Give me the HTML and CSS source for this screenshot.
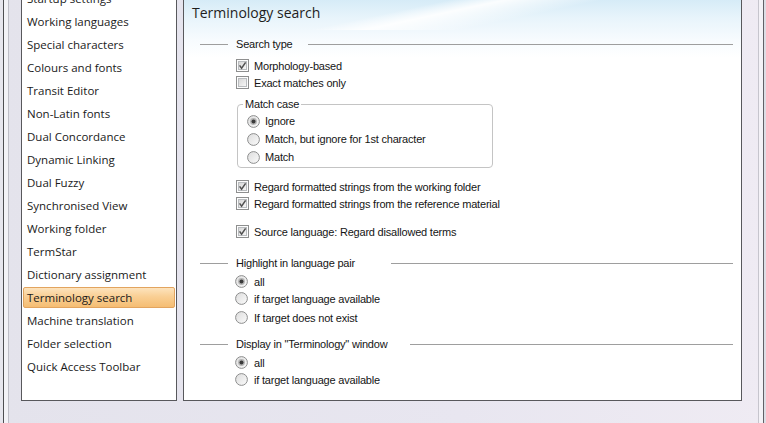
FILE: index.html
```html
<!DOCTYPE html>
<html>
<head>
<meta charset="utf-8">
<title>Terminology search</title>
<link rel="stylesheet" href="styles.css">
</head>
<body>
<svg class="defs" width="0" height="0" aria-hidden="true">
  <defs>
    <linearGradient id="boxg" x1="0" y1="0" x2="1" y2="1">
      <stop offset="0" stop-color="#d6d6d6"/>
      <stop offset="1" stop-color="#f8f8f8"/>
    </linearGradient>
    <linearGradient id="radg" x1="0" y1="0" x2="1" y2="1">
      <stop offset="0" stop-color="#dcdcdc"/>
      <stop offset="1" stop-color="#fbfbfb"/>
    </linearGradient>
    <symbol id="cb" viewBox="0 0 13 13">
      <rect x="0.5" y="0.5" width="12" height="12" fill="#fdfdfd" stroke="#8e8f8f"/>
      <rect x="2.5" y="2.5" width="8" height="8" fill="url(#boxg)" stroke="#b9bcbf"/>
    </symbol>
    <symbol id="cbc" viewBox="0 0 13 13">
      <rect x="0.5" y="0.5" width="12" height="12" fill="#fdfdfd" stroke="#8e8f8f"/>
      <rect x="2.5" y="2.5" width="8" height="8" fill="url(#boxg)" stroke="#b9bcbf"/>
      <path d="M3.6 6.4 L5.6 9.2 L9.6 3.4" fill="none" stroke="#505050" stroke-width="1.5"/>
    </symbol>
    <symbol id="rb" viewBox="0 0 13 13">
      <circle cx="6.5" cy="6.5" r="5.9" fill="url(#radg)" stroke="#8e8f8f"/>
    </symbol>
    <symbol id="rbc" viewBox="0 0 13 13">
      <circle cx="6.5" cy="6.5" r="5.9" fill="url(#radg)" stroke="#8e8f8f"/>
      <circle cx="6.5" cy="6.5" r="3.4" fill="#b4b4b4"/>
      <circle cx="6.5" cy="6.5" r="2" fill="#3a3a3a"/>
    </symbol>
  </defs>
</svg>

<div class="screen">
  <div class="edge-left"></div>

  <div class="nav">
    <ul class="nav-list">
      <li><span class="item">Startup settings</span></li>
      <li><span class="item">Working languages</span></li>
      <li><span class="item">Special characters</span></li>
      <li><span class="item">Colours and fonts</span></li>
      <li><span class="item">Transit Editor</span></li>
      <li><span class="item">Non-Latin fonts</span></li>
      <li><span class="item">Dual Concordance</span></li>
      <li><span class="item">Dynamic Linking</span></li>
      <li><span class="item">Dual Fuzzy</span></li>
      <li><span class="item">Synchronised View</span></li>
      <li><span class="item">Working folder</span></li>
      <li><span class="item">TermStar</span></li>
      <li><span class="item">Dictionary assignment</span></li>
      <li><span class="item selected">Terminology search</span></li>
      <li><span class="item">Machine translation</span></li>
      <li><span class="item">Folder selection</span></li>
      <li><span class="item">Quick Access Toolbar</span></li>
    </ul>
  </div>

  <div class="panel">
    <div class="panel-head">Terminology search</div>
    <div class="panel-body">
      <div class="sep sep-1"><span class="sep-label w-search">Search type</span></div>
      <div class="opt gap-4"><svg class="ic"><use href="#cbc"/></svg><span>Morphology-based</span></div>
      <div class="opt"><svg class="ic"><use href="#cb"/></svg><span>Exact matches only</span></div>

      <fieldset class="group">
        <legend>Match case</legend>
        <div class="gopt"><svg class="ic"><use href="#rbc"/></svg><span>Ignore</span></div>
        <div class="gopt"><svg class="ic"><use href="#rb"/></svg><span>Match, but ignore for 1st character</span></div>
        <div class="gopt"><svg class="ic"><use href="#rb"/></svg><span>Match</span></div>
      </fieldset>

      <div class="opt gap-10"><svg class="ic"><use href="#cbc"/></svg><span>Regard formatted strings from the working folder</span></div>
      <div class="opt"><svg class="ic"><use href="#cbc"/></svg><span>Regard formatted strings from the reference material</span></div>
      <div class="opt gap-11"><svg class="ic"><use href="#cbc"/></svg><span>Source language: Regard disallowed terms</span></div>

      <div class="sep sep-2"><span class="sep-label w-highlight">Highlight in language pair</span></div>
      <div class="opt radio gap-1"><svg class="ic"><use href="#rbc"/></svg><span>all</span></div>
      <div class="opt radio"><svg class="ic"><use href="#rb"/></svg><span>if target language available</span></div>
      <div class="opt radio gap-2"><svg class="ic"><use href="#rb"/></svg><span>If target does not exist</span></div>

      <div class="sep sep-3"><span class="sep-label w-display">Display in "Terminology" window</span></div>
      <div class="opt radio gap-1"><svg class="ic"><use href="#rbc"/></svg><span>all</span></div>
      <div class="opt radio"><svg class="ic"><use href="#rb"/></svg><span>if target language available</span></div>
    </div>
  </div>

  <div class="edge-right"></div>
</div>
</body>
</html>
```
FILE: styles.css
```css
html, body {
  margin: 0;
  padding: 0;
  width: 766px;
  height: 423px;
  overflow: hidden;
}

body {
  background: linear-gradient(to right, #e4e3ec 0%, #e8e6f0 60%, #efebf3 100%);
  font-family: "Liberation Sans", Arial, sans-serif;
  color: #111;
}

.defs {
  display: block;
  width: 0;
  height: 0;
  overflow: hidden;
}

.screen {
  display: flex;
  align-items: flex-start;
  height: 423px;
}

.edge-left {
  width: 21px;
  height: 423px;
  flex: none;
  background: linear-gradient(to right,
    #e7e6ee 0, #e7e6ee 3px,
    #4e4e52 3px, #4e4e52 4px,
    #f3f2f7 4px, #f3f2f7 8px,
    #bebdc7 8px, #bebdc7 9px,
    transparent 9px);
}

/* ---------- navigation list ---------- */
.nav {
  width: 156px;
  height: 401px;
  flex: none;
  box-sizing: border-box;
  background: #fff;
  border: 1px solid #58585c;
  border-top: none;
  overflow: hidden;
}

.nav-list {
  list-style: none;
  margin: -13px 0 0 0;
  padding: 0 1px;
  font-family: "Open Sans", "Liberation Sans", sans-serif;
  font-size: 11.5px;
  color: #1a1a1a;
}

.nav-list li {
  height: 23px;
  padding: 1px 0;
  box-sizing: border-box;
}

.item {
  display: block;
  height: 21px;
  line-height: 21px;
  padding-left: 4px;
  white-space: nowrap;
}

.item.selected {
  box-sizing: border-box;
  line-height: 19px;
  padding-left: 3px;
  border: 1px solid #e2a45f;
  border-radius: 2px;
  background: linear-gradient(to bottom, #fde3bd 0%, #f9cf94 45%, #f5bd73 100%);
}

/* ---------- main panel ---------- */
.panel {
  width: 559px;
  height: 401px;
  flex: none;
  margin-left: 6px;
  box-sizing: border-box;
  border: 1px solid #58585c;
  border-top: none;
  background:
    linear-gradient(168deg, rgba(255,255,255,0) 0%, rgba(255,255,255,0) 38%, rgba(255,255,255,0.9) 46%, rgba(255,255,255,0) 60%) no-repeat 0 0 / 100% 30px,
    linear-gradient(to bottom, #d6ebf7 0px, #e8f4fb 18px, #f7fbfe 40px, #ffffff 58px) no-repeat 0 0 / 100% 60px,
    #fff;
}

.panel-head {
  height: 25px;
  line-height: 25px;
  padding-left: 8px;
  font-family: "Open Sans", "Liberation Sans", sans-serif;
  font-size: 14px;
  color: #1e1e1e;
}

.panel-body {
  padding: 0 8px 0 16px;
  font-size: 11px;
  letter-spacing: -0.2px;
  color: #151515;
}

.sep {
  display: flex;
  align-items: center;
  height: 18px;
}

.sep::before {
  content: "";
  width: 28px;
  height: 1px;
  margin-right: 8px;
  background: #9e9e9e;
  flex: none;
}

.sep::after {
  content: "";
  flex: 1;
  height: 1px;
  background: #9e9e9e;
}

.sep-label {
  flex: none;
  white-space: nowrap;
}

.w-search { width: 72px; }
.w-highlight { width: 155px; }
.w-display { width: 174px; }

.sep-1 { margin-top: 10px; }
.sep-2 { margin-top: 14px; }
.sep-3 { margin-top: 9px; }

.opt {
  display: flex;
  align-items: center;
  height: 17px;
  padding-left: 36px;
  white-space: nowrap;
}

.opt.radio { padding-left: 35px; }
.opt.radio .ic { margin-right: 6px; }

.ic {
  width: 13px;
  height: 13px;
  flex: none;
  margin-right: 5px;
}

.gap-1 { margin-top: 1px; }
.gap-2 { margin-top: 2px; }
.gap-4 { margin-top: 4px; }
.gap-10 { margin-top: 10px; }
.gap-11 { margin-top: 11px; }

.group {
  box-sizing: border-box;
  width: 256px;
  margin: 6px 0 0 37px;
  padding: 1px 0 1px 0;
  border: 1px solid #c4c4c4;
  border-radius: 4px;
  min-width: 0;
}

.group legend {
  margin-left: 5px;
  padding: 0 2px;
  line-height: 14px;
  font-size: 11px;
}

.gopt {
  display: flex;
  align-items: center;
  height: 18px;
  padding-left: 9px;
  white-space: nowrap;
}

/* ---------- right edge ---------- */
.edge-right {
  flex: 1;
  height: 423px;
  background: linear-gradient(to right,
    transparent 0, transparent 16px,
    #c6c5cd 16px, #c6c5cd 17px,
    #f4f2f7 17px, #f4f2f7 21px,
    #616166 21px, #616166 22px,
    #dedde5 22px);
}
```
